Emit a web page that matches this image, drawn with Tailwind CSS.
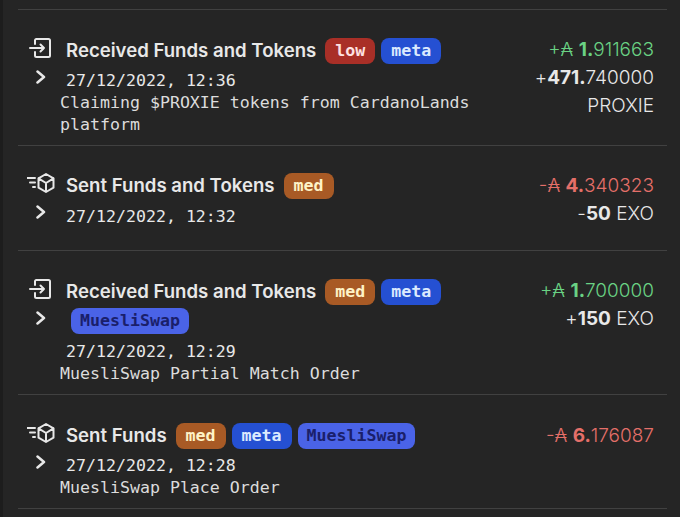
<!DOCTYPE html>
<html lang="en">
<head>
    <meta charset="utf-8">
    <script src="https://cdn.jsdelivr.net/npm/@tailwindcss/browser@4"></script>
    <title>Transactions</title>
</head>

<body class="bg-[#252525] overflow-hidden">
<div class="h-[517px] border-l-[3px] border-[#1d1d1d] pl-[15px] pr-[13px] pt-[9px] text-[#e8e8e8] font-['Inter',sans-serif]">
    <div class="border-t border-[#414141]">

        <!-- received, low + meta -->
        <div class="flex items-start h-[136px] border-b border-[#414141] pt-[28px] pr-[13px]">
            <div class="w-[42px] shrink-0 pl-[4px] flex flex-col items-center gap-[12px]">
                <svg class="w-[24px] h-[20px]" viewBox="0 0 24 20" fill="none" stroke="currentColor" stroke-width="2" stroke-linecap="round" stroke-linejoin="round"><path d="M6 6V2a1.5 1.5 0 0 1 1.5-1h12A1.5 1.5 0 0 1 21 2.500v15a1.500 1.500 0 0 1-1.500 1.500h-12A1.500 1.500 0 0 1 6 17.500V14"/><path d="M1 10h14M11.500 6.500 15 10l-3.500 3.500"/></svg>
                <svg class="w-[12px] h-[14px]" viewBox="0 0 12 14" fill="none" stroke="currentColor" stroke-width="2.500" stroke-linecap="round" stroke-linejoin="round"><path d="M2.500 1.500 9 7l-6.500 5.500"/></svg>
            </div>
            <div class="w-[470px] font-['DejaVu_Sans_Mono',monospace] text-[16.600px] leading-[22px]">
                <div class="flex flex-wrap items-center gap-x-[6px] gap-y-[3px] pl-[6px]">
                    <span class="mr-[3px] pb-[2px] font-['Inter',sans-serif] text-[18.600px] font-semibold">Received Funds and Tokens</span>
                    <span class="h-[26px] leading-[26px] px-[10px] rounded-[8px] font-bold bg-[#a92f27] text-[#fee2e2]">low</span>
                    <span class="h-[26px] leading-[26px] px-[10px] rounded-[8px] font-bold bg-[#2550d2] text-[#dbeafe]">meta</span>
                </div>
                <div class="pl-[6px] mt-[6px]">27/12/2022, 12:36</div>
                <div class="text-[#dcdcdc]">Claiming $PROXIE tokens from CardanoLands platform</div>
            </div>
            <div class="flex-1 -mt-[2px] text-right text-[19px] leading-[28px] font-light whitespace-nowrap">
                <div class="text-[#6ad284]">+₳ <b class="font-bold">1.</b>911663</div>
                <div>+<b class="font-bold">471.</b>740000</div>
                <div>PROXIE</div>
            </div>
        </div>

        <!-- sent, med -->
        <div class="flex items-start h-[105px] border-b border-[#414141] pt-[27px] pr-[13px]">
            <div class="w-[42px] shrink-0 pl-[4px] flex flex-col items-center gap-[12px]">
                <svg class="w-[28px] h-[20px]" viewBox="0 0 28 20" fill="none" stroke="currentColor" stroke-width="2" stroke-linecap="round" stroke-linejoin="round"><path d="M0.500 5h7.500M3 9.500h5M6 14h2"/><path d="M19 1l7.500 4.300v9.400L19 19l-7.500-4.300V5.300zM11.500 5.300 19 10l7.500-4.700M19 10v9"/></svg>
                <svg class="w-[12px] h-[14px]" viewBox="0 0 12 14" fill="none" stroke="currentColor" stroke-width="2.500" stroke-linecap="round" stroke-linejoin="round"><path d="M2.500 1.500 9 7l-6.500 5.500"/></svg>
            </div>
            <div class="w-[470px] font-['DejaVu_Sans_Mono',monospace] text-[16.600px] leading-[22px]">
                <div class="flex flex-wrap items-center gap-x-[6px] gap-y-[3px] pl-[6px]">
                    <span class="mr-[3px] pb-[2px] font-['Inter',sans-serif] text-[18.600px] font-semibold">Sent Funds and Tokens</span>
                    <span class="h-[26px] leading-[26px] px-[10px] rounded-[8px] font-bold bg-[#a85a25] text-[#fef3c7]">med</span>
                </div>
                <div class="pl-[6px] mt-[7px]">27/12/2022, 12:32</div>
            </div>
            <div class="flex-1 -mt-[1px] text-right text-[19px] leading-[28px] font-light whitespace-nowrap">
                <div class="text-[#e46f69]">-₳ <b class="font-bold">4.</b>340323</div>
                <div>-<b class="font-bold">50</b> EXO</div>
            </div>
        </div>

        <!-- received, wrapped chips -->
        <div class="flex items-start h-[144px] border-b border-[#414141] pt-[28px] pr-[13px]">
            <div class="w-[42px] shrink-0 pl-[4px] flex flex-col items-center gap-[12px]">
                <svg class="w-[24px] h-[20px]" viewBox="0 0 24 20" fill="none" stroke="currentColor" stroke-width="2" stroke-linecap="round" stroke-linejoin="round"><path d="M6 6V2a1.5 1.5 0 0 1 1.5-1h12A1.5 1.5 0 0 1 21 2.500v15a1.500 1.500 0 0 1-1.500 1.500h-12A1.500 1.500 0 0 1 6 17.500V14"/><path d="M1 10h14M11.500 6.500 15 10l-3.500 3.500"/></svg>
                <svg class="w-[12px] h-[14px]" viewBox="0 0 12 14" fill="none" stroke="currentColor" stroke-width="2.500" stroke-linecap="round" stroke-linejoin="round"><path d="M2.500 1.500 9 7l-6.500 5.500"/></svg>
            </div>
            <div class="w-[470px] font-['DejaVu_Sans_Mono',monospace] text-[16.600px] leading-[22px]">
                <div class="flex flex-wrap items-center gap-x-[6px] gap-y-[3px] pl-[6px]">
                    <span class="mr-[3px] pb-[2px] font-['Inter',sans-serif] text-[18.600px] font-semibold">Received Funds and Tokens</span>
                    <span class="h-[26px] leading-[26px] px-[10px] rounded-[8px] font-bold bg-[#a85a25] text-[#fef3c7]">med</span>
                    <span class="h-[26px] leading-[26px] px-[10px] rounded-[8px] font-bold bg-[#2550d2] text-[#dbeafe]">meta</span>
                    <span class="h-[26px] leading-[26px] ml-[5px] px-[9px] rounded-[8px] font-bold bg-[#4a63e7] text-[#1a1f6b]">MuesliSwap</span>
                </div>
                <div class="pl-[6px] mt-[7px]">27/12/2022, 12:29</div>
                <div class="text-[#dcdcdc]">MuesliSwap Partial Match Order</div>
            </div>
            <div class="flex-1 -mt-[2px] text-right text-[19px] leading-[28px] font-light whitespace-nowrap">
                <div class="text-[#6ad284]">+₳ <b class="font-bold">1.</b>700000</div>
                <div>+<b class="font-bold">150</b> EXO</div>
            </div>
        </div>

        <!-- sent, all chips -->
        <div class="flex items-start h-[114px] border-b border-[#414141] pt-[28px] pr-[13px]">
            <div class="w-[42px] shrink-0 pl-[4px] flex flex-col items-center gap-[12px]">
                <svg class="w-[28px] h-[20px]" viewBox="0 0 28 20" fill="none" stroke="currentColor" stroke-width="2" stroke-linecap="round" stroke-linejoin="round"><path d="M0.500 5h7.500M3 9.500h5M6 14h2"/><path d="M19 1l7.500 4.300v9.400L19 19l-7.500-4.300V5.300zM11.500 5.300 19 10l7.500-4.700M19 10v9"/></svg>
                <svg class="w-[12px] h-[14px]" viewBox="0 0 12 14" fill="none" stroke="currentColor" stroke-width="2.500" stroke-linecap="round" stroke-linejoin="round"><path d="M2.500 1.500 9 7l-6.500 5.500"/></svg>
            </div>
            <div class="w-[470px] font-['DejaVu_Sans_Mono',monospace] text-[16.600px] leading-[22px]">
                <div class="flex flex-wrap items-center gap-x-[6px] gap-y-[3px] pl-[6px]">
                    <span class="mr-[3px] pb-[2px] font-['Inter',sans-serif] text-[18.600px] font-semibold">Sent Funds</span>
                    <span class="h-[26px] leading-[26px] px-[10px] rounded-[8px] font-bold bg-[#a85a25] text-[#fef3c7]">med</span>
                    <span class="h-[26px] leading-[26px] px-[10px] rounded-[8px] font-bold bg-[#2550d2] text-[#dbeafe]">meta</span>
                    <span class="h-[26px] leading-[26px] px-[9px] rounded-[8px] font-bold bg-[#4a63e7] text-[#1a1f6b]">MuesliSwap</span>
                </div>
                <div class="pl-[6px] mt-[6px]">27/12/2022, 12:28</div>
                <div class="text-[#dcdcdc]">MuesliSwap Place Order</div>
            </div>
            <div class="flex-1 -mt-[1px] text-right text-[19px] leading-[28px] font-light whitespace-nowrap">
                <div class="text-[#e46f69]">-₳ <b class="font-bold">6.</b>176087</div>
            </div>
        </div>

    </div>
</div>
</body>
</html>
